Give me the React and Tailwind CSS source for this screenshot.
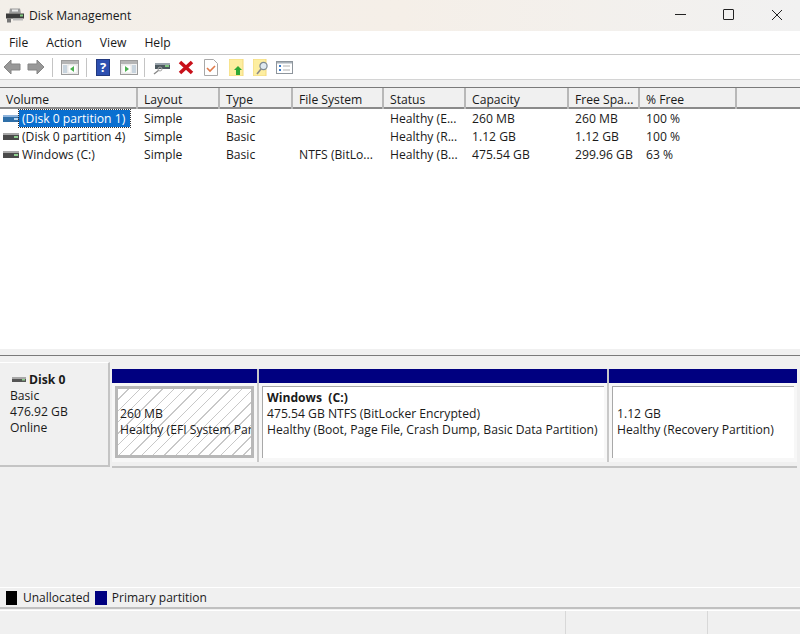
const cols = 'grid grid-cols-[138px_82px_73px_91px_82px_103px_71px_97px_1fr]';

const rows = [
  ['(Disk 0 partition 1)', 'Simple', 'Basic', '', 'Healthy (E...', '260 MB', '260 MB', '100 %'],
  ['(Disk 0 partition 4)', 'Simple', 'Basic', '', 'Healthy (R...', '1.12 GB', '1.12 GB', '100 %'],
  ['Windows (C:)', 'Simple', 'Basic', 'NTFS (BitLo...', 'Healthy (B...', '475.54 GB', '299.96 GB', '63 %'],
];

const headers = ['Volume', 'Layout', 'Type', 'File System', 'Status', 'Capacity', 'Free Spa...', '% Free', ''];

function AppIcon() {
  return (
    <svg width="18" height="17" viewBox="0 0 18 16">
      <path d="M4 1h10l1 5H3z" fill="#9a9a9a" />
      <rect x="6" y="2" width="6" height="2" fill="#e8e8e8" />
      <rect x="0" y="6" width="18" height="5" fill="#3c3c3c" />
      <rect x="14" y="7" width="3" height="2" fill="#7fc97f" />
      <rect x="1" y="11" width="4" height="4" fill="#777" />
      <rect x="7" y="11" width="10" height="2" fill="#bbb" />
    </svg>
  );
}

function DriveIcon({ blue }) {
  return (
    <svg width="16" height="8" viewBox="0 0 16 8">
      <rect x="0" y="0" width="16" height="2" fill={blue ? '#8fb4dc' : '#a8a8a8'} />
      <rect x="0" y="2" width="16" height="5" fill={blue ? '#2f6fa8' : '#4a4a4a'} />
      <rect x="11" y="3" width="4" height="2" fill={blue ? '#bcd8f2' : '#8fd08f'} />
    </svg>
  );
}

function Arrow({ flip }) {
  return (
    <svg width="18" height="16" viewBox="0 0 18 16" className={flip ? '-scale-x-100' : ''}>
      <path d="M1 8l7-7v4h9v6H8v4z" fill="#989898" stroke="#858585" strokeWidth="1" />
    </svg>
  );
}

function PaneIcon({ right }) {
  return (
    <svg width="18" height="15" viewBox="0 0 18 15">
      <rect x="0.5" y="0.5" width="17" height="14" fill="#f2f2f2" stroke="#9b9b9b" />
      <rect x="1" y="1" width="16" height="3" fill="#b5b5b5" />
      <rect x={right ? 12 : 2} y="5" width="4" height="8" fill="#c8d4de" />
      <rect x={right ? 2 : 7} y="5" width="9" height="8" fill="#fff" stroke="#d0d0d0" strokeWidth="0.5" />
      <path d={right ? 'M5 6l4 3-4 3z' : 'M13 6l-4 3 4 3z'} fill="#4cb050" />
    </svg>
  );
}

function HelpIcon() {
  return (
    <div className="w-[14px] h-[17px] bg-[#2d4fb0] border border-[#22397f] flex items-center justify-center text-white text-[13px] font-bold leading-none">
      ?
    </div>
  );
}

function ConnectIcon() {
  return (
    <svg width="17" height="15" viewBox="0 0 17 15">
      <rect x="2" y="3" width="15" height="3" fill="#9aa4ac" />
      <rect x="2" y="5" width="15" height="4" fill="#4d5a60" />
      <rect x="12" y="5" width="4" height="2" fill="#7fc97f" />
      <path d="M6 10l-5 4" stroke="#8a8a8a" strokeWidth="1.5" />
      <circle cx="7" cy="9" r="2" fill="none" stroke="#a8a8a8" />
    </svg>
  );
}

function DeleteIcon() {
  return (
    <svg width="16" height="15" viewBox="0 0 16 15">
      <path d="M2 2l12 11M14 2L2 13" stroke="#c8101a" strokeWidth="3.6" />
    </svg>
  );
}

function CheckDoc() {
  return (
    <svg width="14" height="17" viewBox="0 0 14 17">
      <path d="M.5.5h9l4 4v12H.5z" fill="#fff" stroke="#a8a8a8" />
      <path d="M3 9l3 3 5-5" fill="none" stroke="#e07a4a" strokeWidth="1.6" />
    </svg>
  );
}

function FolderUp() {
  return (
    <svg width="15" height="17" viewBox="0 0 15 17">
      <rect x="0" y="0" width="14" height="17" fill="#fdeea0" stroke="#f3d97c" />
      <path d="M9 7l4 4h-2v5H7v-5H5z" fill="#2ea836" />
    </svg>
  );
}

function FolderSearch() {
  return (
    <svg width="16" height="17" viewBox="0 0 16 17">
      <rect x="0" y="0" width="13" height="17" fill="#fdeea0" stroke="#f3d97c" />
      <circle cx="10.5" cy="7" r="3.6" fill="#dfe9f0" stroke="#7d8a94" strokeWidth="1.2" />
      <path d="M8 10l-4 5" stroke="#8a8a8a" strokeWidth="1.6" />
    </svg>
  );
}

function ListIcon() {
  return (
    <svg width="17" height="13" viewBox="0 0 17 13">
      <rect x="0.5" y="0.5" width="16" height="12" fill="#fff" stroke="#8e959c" />
      <rect x="1" y="1" width="15" height="1.5" fill="#a9b2ba" />
      <path d="M3 4h2v2H3zM3 8h2v2H3z" fill="#3d7cc9" />
      <path d="M7 5h7M7 9h7" stroke="#b0b0b0" />
    </svg>
  );
}

function Sep() {
  return <div className="w-px h-[19px] bg-[#c4c4c4]" />;
}

function Partition({ width, selected, children }) {
  return (
    <div className={width + ' flex flex-col'}>
      <div className="h-[14px] bg-[#000080]" />
      <div className="h-[79px] bg-[#f7f7f7] pt-[3px] pb-[4px] px-[3px]">
        {selected ? (
          <div className="h-full border-[3px] border-[#b8b8b8] bg-[repeating-linear-gradient(135deg,#ffffff_0px,#ffffff_7px,#c8c8c8_7px,#c8c8c8_8px)] overflow-hidden whitespace-nowrap pl-[2px] pt-px leading-4">
            {children}
          </div>
        ) : (
          <div className="h-full border-l border-t border-[#a8a8a8] bg-white overflow-hidden whitespace-nowrap pl-[4px] pt-[3px] leading-4">
            {children}
          </div>
        )}
      </div>
    </div>
  );
}

export default function App() {
  return (
    <div className="w-[800px] h-[634px] flex flex-col overflow-hidden bg-[#f0f0f0] text-[12.15px] text-[#1a1a1a] font-['Open_Sans',sans-serif]">
      {/* title bar */}
      <div className="h-[31px] flex items-center bg-gradient-to-r from-[#f3efe9] via-[#f5efe8] to-[#f1f1f1]">
        <div className="ml-[6px] mr-[5px]">
          <AppIcon />
        </div>
        <span className="pt-[2px]">Disk Management</span>
        <div className="ml-auto flex items-center pb-[2px]">
          <div className="w-[44px] flex justify-center">
            <div className="w-[11px] h-px bg-[#222]" />
          </div>
          <div className="w-[52px] flex justify-center">
            <div className="w-[11px] h-[11px] border border-[#222] rounded-[1px]" />
          </div>
          <div className="w-[46px] flex justify-center">
            <svg width="12" height="12" viewBox="0 0 12 12">
              <path d="M1 1l10 10M11 1L1 11" stroke="#222" strokeWidth="1" />
            </svg>
          </div>
        </div>
      </div>

      {/* menu */}
      <div className="h-[24px] flex items-center bg-white border-b border-[#c8c8c8] pl-[9px] pt-[2px] gap-[18px]">
        <span>File</span>
        <span>Action</span>
        <span>View</span>
        <span>Help</span>
      </div>

      {/* toolbar */}
      <div className="h-[25px] flex items-center bg-white border-b border-[#d4d4d4] pl-[3px]">
        <Arrow />
        <div className="ml-[6px]"><Arrow flip /></div>
        <div className="ml-[7px]"><Sep /></div>
        <div className="ml-[8px]"><PaneIcon /></div>
        <div className="ml-[7px]"><Sep /></div>
        <div className="ml-[9px]"><HelpIcon /></div>
        <div className="ml-[10px]"><PaneIcon right /></div>
        <div className="ml-[6px]"><Sep /></div>
        <div className="ml-[8px]"><ConnectIcon /></div>
        <div className="ml-[8px]"><DeleteIcon /></div>
        <div className="ml-[10px]"><CheckDoc /></div>
        <div className="ml-[11px]"><FolderUp /></div>
        <div className="ml-[9px]"><FolderSearch /></div>
        <div className="ml-[7px]"><ListIcon /></div>
      </div>

      <div className="h-[7px] bg-[#f0f0f0]" />

      {/* volume list */}
      <div className="h-[262px] bg-white border-t border-[#7a7a7a]">
        <div className={cols + ' h-[21px] bg-[#f0f0f0] border-b-2 border-[#8a8a8a]'}>
          {headers.map((h, i) => (
            <div key={i} className="pl-[6px] pt-[3px] flex items-center border-r-2 border-[#b8b8b8] last:border-r-0 whitespace-nowrap">
              {h}
            </div>
          ))}
        </div>
        {rows.map((r, i) => (
          <div key={i} className={cols + ' h-[18px] pt-px items-center leading-[17px]'}>
            <div className="flex items-center pl-[3px] whitespace-nowrap">
              <DriveIcon blue={i === 0} />
              <span className={i === 0 ? 'bg-[#0a6fd0] text-white pl-[3px] pr-[5px] outline-dotted outline-1 outline-[#333]' : 'pl-[3px]'}>
                {r[0]}
              </span>
            </div>
            {r.slice(1).map((c, j) => (
              <div key={j} className="pl-[6px] whitespace-nowrap">{c}</div>
            ))}
          </div>
        ))}
      </div>

      {/* splitter */}
      <div className="h-[7px] bg-[#f0f0f0] border-b border-[#7a7a7a]" />

      {/* disk map */}
      <div className="h-[231px] pt-[6px] flex flex-col">
        <div className="flex items-start">
          <div className="w-[110px] h-[105px] border-r-2 border-b-2 border-[#c4c4c4] border-t border-t-white pl-[10px] pt-[9px] leading-4">
            <div className="flex items-center gap-[3px] font-bold">
              <div className="pl-[2px]"><svg width="14" height="6" viewBox="0 0 14 6"><rect width="14" height="2" fill="#a8a8a8" /><rect y="2" width="14" height="3" fill="#555" /><rect x="10" y="2" width="3" height="1.5" fill="#8fd08f" /></svg></div>
              Disk 0
            </div>
            <div>Basic</div>
            <div>476.92 GB</div>
            <div>Online</div>
          </div>
          <div className="flex-1 pl-[2px] pt-[7px] pr-[3px]">
            <div className="flex border-b-2 border-[#c4c4c4] pb-[4px]">
              <div className="border-r-2 border-[#c8c8c8]">
                <Partition width="w-[145px]" selected>
                  <div className="h-4" />
                  <div className="h-4">260 MB</div>
                  <div>Healthy (EFI System Par</div>
                </Partition>
              </div>
              <div className="border-r-2 border-[#c8c8c8]">
                <Partition width="w-[348px]">
                  <div className="font-bold">Windows&nbsp;&nbsp;(C:)</div>
                  <div>475.54 GB NTFS (BitLocker Encrypted)</div>
                  <div>Healthy (Boot, Page File, Crash Dump, Basic Data Partition)</div>
                </Partition>
              </div>
              <Partition width="flex-1">
                <div className="h-4" />
                <div>1.12 GB</div>
                <div>Healthy (Recovery Partition)</div>
              </Partition>
            </div>
          </div>
        </div>
      </div>

      {/* legend */}
      <div className="h-[22px] flex items-center border-t border-white border-b-2 border-b-[#c0c0c0] pl-[6px] text-[12px]">
        <div className="w-[11px] h-[14px] bg-black" />
        <span className="ml-[6px] pt-px">Unallocated</span>
        <div className="ml-[5px] w-[12px] h-[14px] bg-[#000080]" />
        <span className="ml-[5px] pt-px">Primary partition</span>
      </div>

      {/* status bar */}
      <div className="flex-1 mt-[1px] grid grid-cols-[566px_142px_1fr] border-t border-white">
        <div className="border-r border-[#d8d8d8]" />
        <div className="border-r border-[#d8d8d8]" />
        <div />
      </div>
    </div>
  );
}
